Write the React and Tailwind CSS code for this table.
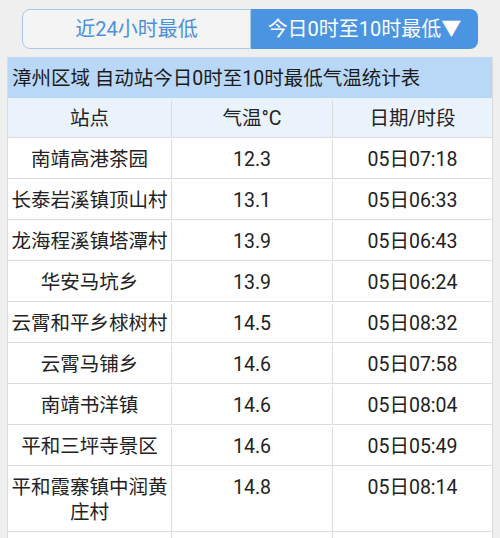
const rows = [
  ["南靖高港茶园", "12.3", "05日07:18"],
  ["长泰岩溪镇顶山村", "13.1", "05日06:33"],
  ["龙海程溪镇塔潭村", "13.9", "05日06:43"],
  ["华安马坑乡", "13.9", "05日06:24"],
  ["云霄和平乡梂树村", "14.5", "05日08:32"],
  ["云霄马铺乡", "14.6", "05日07:58"],
  ["南靖书洋镇", "14.6", "05日08:04"],
  ["平和三坪寺景区", "14.6", "05日05:49"],
  ["平和霞寨镇中润黄庄村", "14.8", "05日08:14"],
];

function Cell({ children, first, tall }) {
  return (
    <div
      className={`flex justify-center px-[2px] text-center leading-[25px] ${
        tall ? "items-start pt-[9px]" : "items-center"
      } ${first ? "" : "border-l border-[#dcdcdc]"}`}
    >
      {children}
    </div>
  );
}

export default function App() {
  return (
    <div
      className="w-[500px] h-[538px] overflow-hidden bg-[#efefef] text-[#222]"
      style={{ fontFamily: "Roboto, 'Noto Sans CJK SC', sans-serif" }}
    >
      {/* Tabs */}
      <div className="flex px-[22px] pt-[9px]">
        <div className="flex-1 h-[40px] flex items-center justify-center rounded-l-[8px] border border-[#a9c9ea] bg-[#f4f4f4] text-[#4a90dc] text-[20px]">
          近24小时最低
        </div>
        <div className="flex-1 h-[40px] flex items-center justify-center rounded-r-[8px] bg-[#4a94e2] text-white text-[20px]">
          今日0时至10时最低▼
        </div>
      </div>

      {/* Table */}
      <div className="mx-[7px] mt-[8px] border-l border-r border-[#dcdcdc] bg-white text-[19.5px]">
        <div className="h-[41px] flex items-center pl-[4px] pt-[2px] bg-[#b9d8f7] text-[19.5px] text-[#1a1a1a]">
          漳州区域 自动站今日0时至10时最低气温统计表
        </div>
        <div className="grid grid-cols-[163px_161px_1fr] h-[40px] pt-[2px] bg-[#eaf2fc] border-b border-[#dcdcdc]">
          <Cell first>站点</Cell>
          <Cell>气温°C</Cell>
          <Cell>日期/时段</Cell>
        </div>
        {rows.map((r, i) => {
          const tall = r[0].length > 8;
          return (
            <div
              key={i}
              className={`grid grid-cols-[163px_161px_1fr] border-b border-[#dcdcdc] ${
                tall ? "h-[66px]" : "h-[41px] pt-[2px]"
              }`}
            >
              <Cell first tall={tall}>
                {r[0]}
              </Cell>
              <Cell tall={tall}>{r[1]}</Cell>
              <Cell tall={tall}>{r[2]}</Cell>
            </div>
          );
        })}
        <div className="grid grid-cols-[163px_161px_1fr] h-[41px]">
          <Cell first />
          <Cell />
          <Cell />
        </div>
      </div>
    </div>
  );
}
